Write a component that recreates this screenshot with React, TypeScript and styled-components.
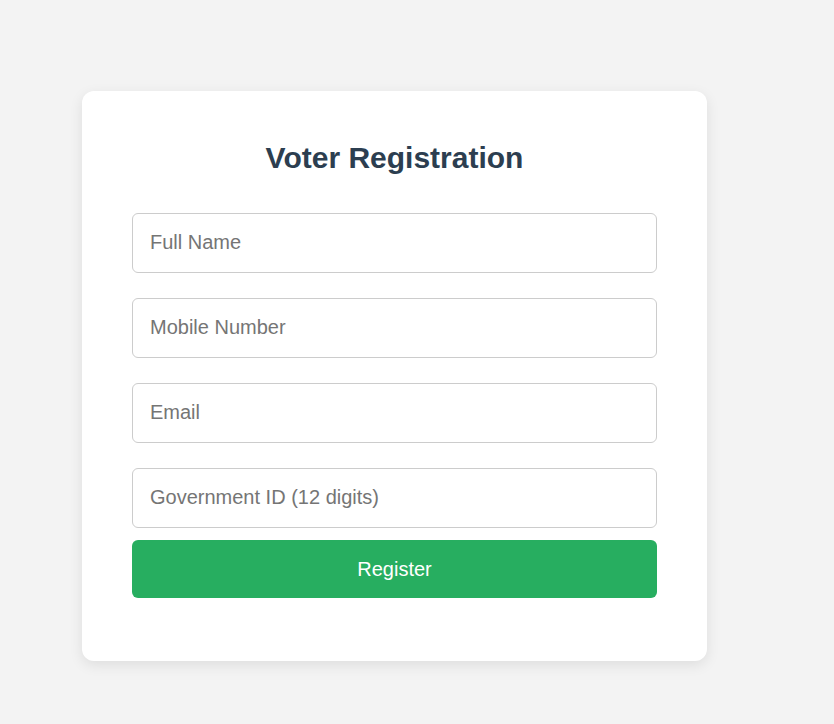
import React from "react";
import styled, { createGlobalStyle } from "styled-components";

const Global = createGlobalStyle`
  * { box-sizing: border-box; }
  html, body { margin: 0; padding: 0; }
  body {
    background: #f3f3f3;
    font-family: "Liberation Sans", Arial, sans-serif;
    min-height: 724px;
  }
`;

const Page = styled.div`
  padding: 91px 0 0 82px;
`;

const Card = styled.div`
  width: 625px;
  background: #ffffff;
  border-radius: 12px;
  padding: 50px 50px 50px;
  box-shadow: 0 4px 14px rgba(0, 0, 0, 0.09);
`;

const Title = styled.h2`
  margin: 0 0 38px;
  font-size: 30px;
  line-height: 34px;
  font-weight: 700;
  color: #2c3e50;
  text-align: center;
`;

const Form = styled.form`
  display: flex;
  flex-direction: column;
`;

const Input = styled.input`
  height: 60px;
  width: 100%;
  margin-bottom: 25px;
  padding: 0 17px 2px;
  border: 1px solid #cccccc;
  border-radius: 6px;
  font-family: "Liberation Sans", Arial, sans-serif;
  font-size: 20px;
  color: #333;
  background: #fff;
  outline: none;
  &:last-of-type { margin-bottom: 12px; }
  &::placeholder { color: #757575; }
`;

const Button = styled.button`
  height: 58px;
  width: 100%;
  margin-bottom: 13px;
  border: none;
  border-radius: 6px;
  background: #27ae60;
  color: #ffffff;
  font-family: "Liberation Sans", Arial, sans-serif;
  font-size: 20px;
  cursor: pointer;
`;

export default function App() {
  return (
    <>
      <Global />
      <Page>
        <Card>
          <Title>Voter Registration</Title>
          <Form onSubmit={(e) => e.preventDefault()}>
            <Input type="text" placeholder="Full Name" />
            <Input type="text" placeholder="Mobile Number" />
            <Input type="email" placeholder="Email" />
            <Input type="text" placeholder="Government ID (12 digits)" />
            <Button type="submit">Register</Button>
          </Form>
        </Card>
      </Page>
    </>
  );
}
